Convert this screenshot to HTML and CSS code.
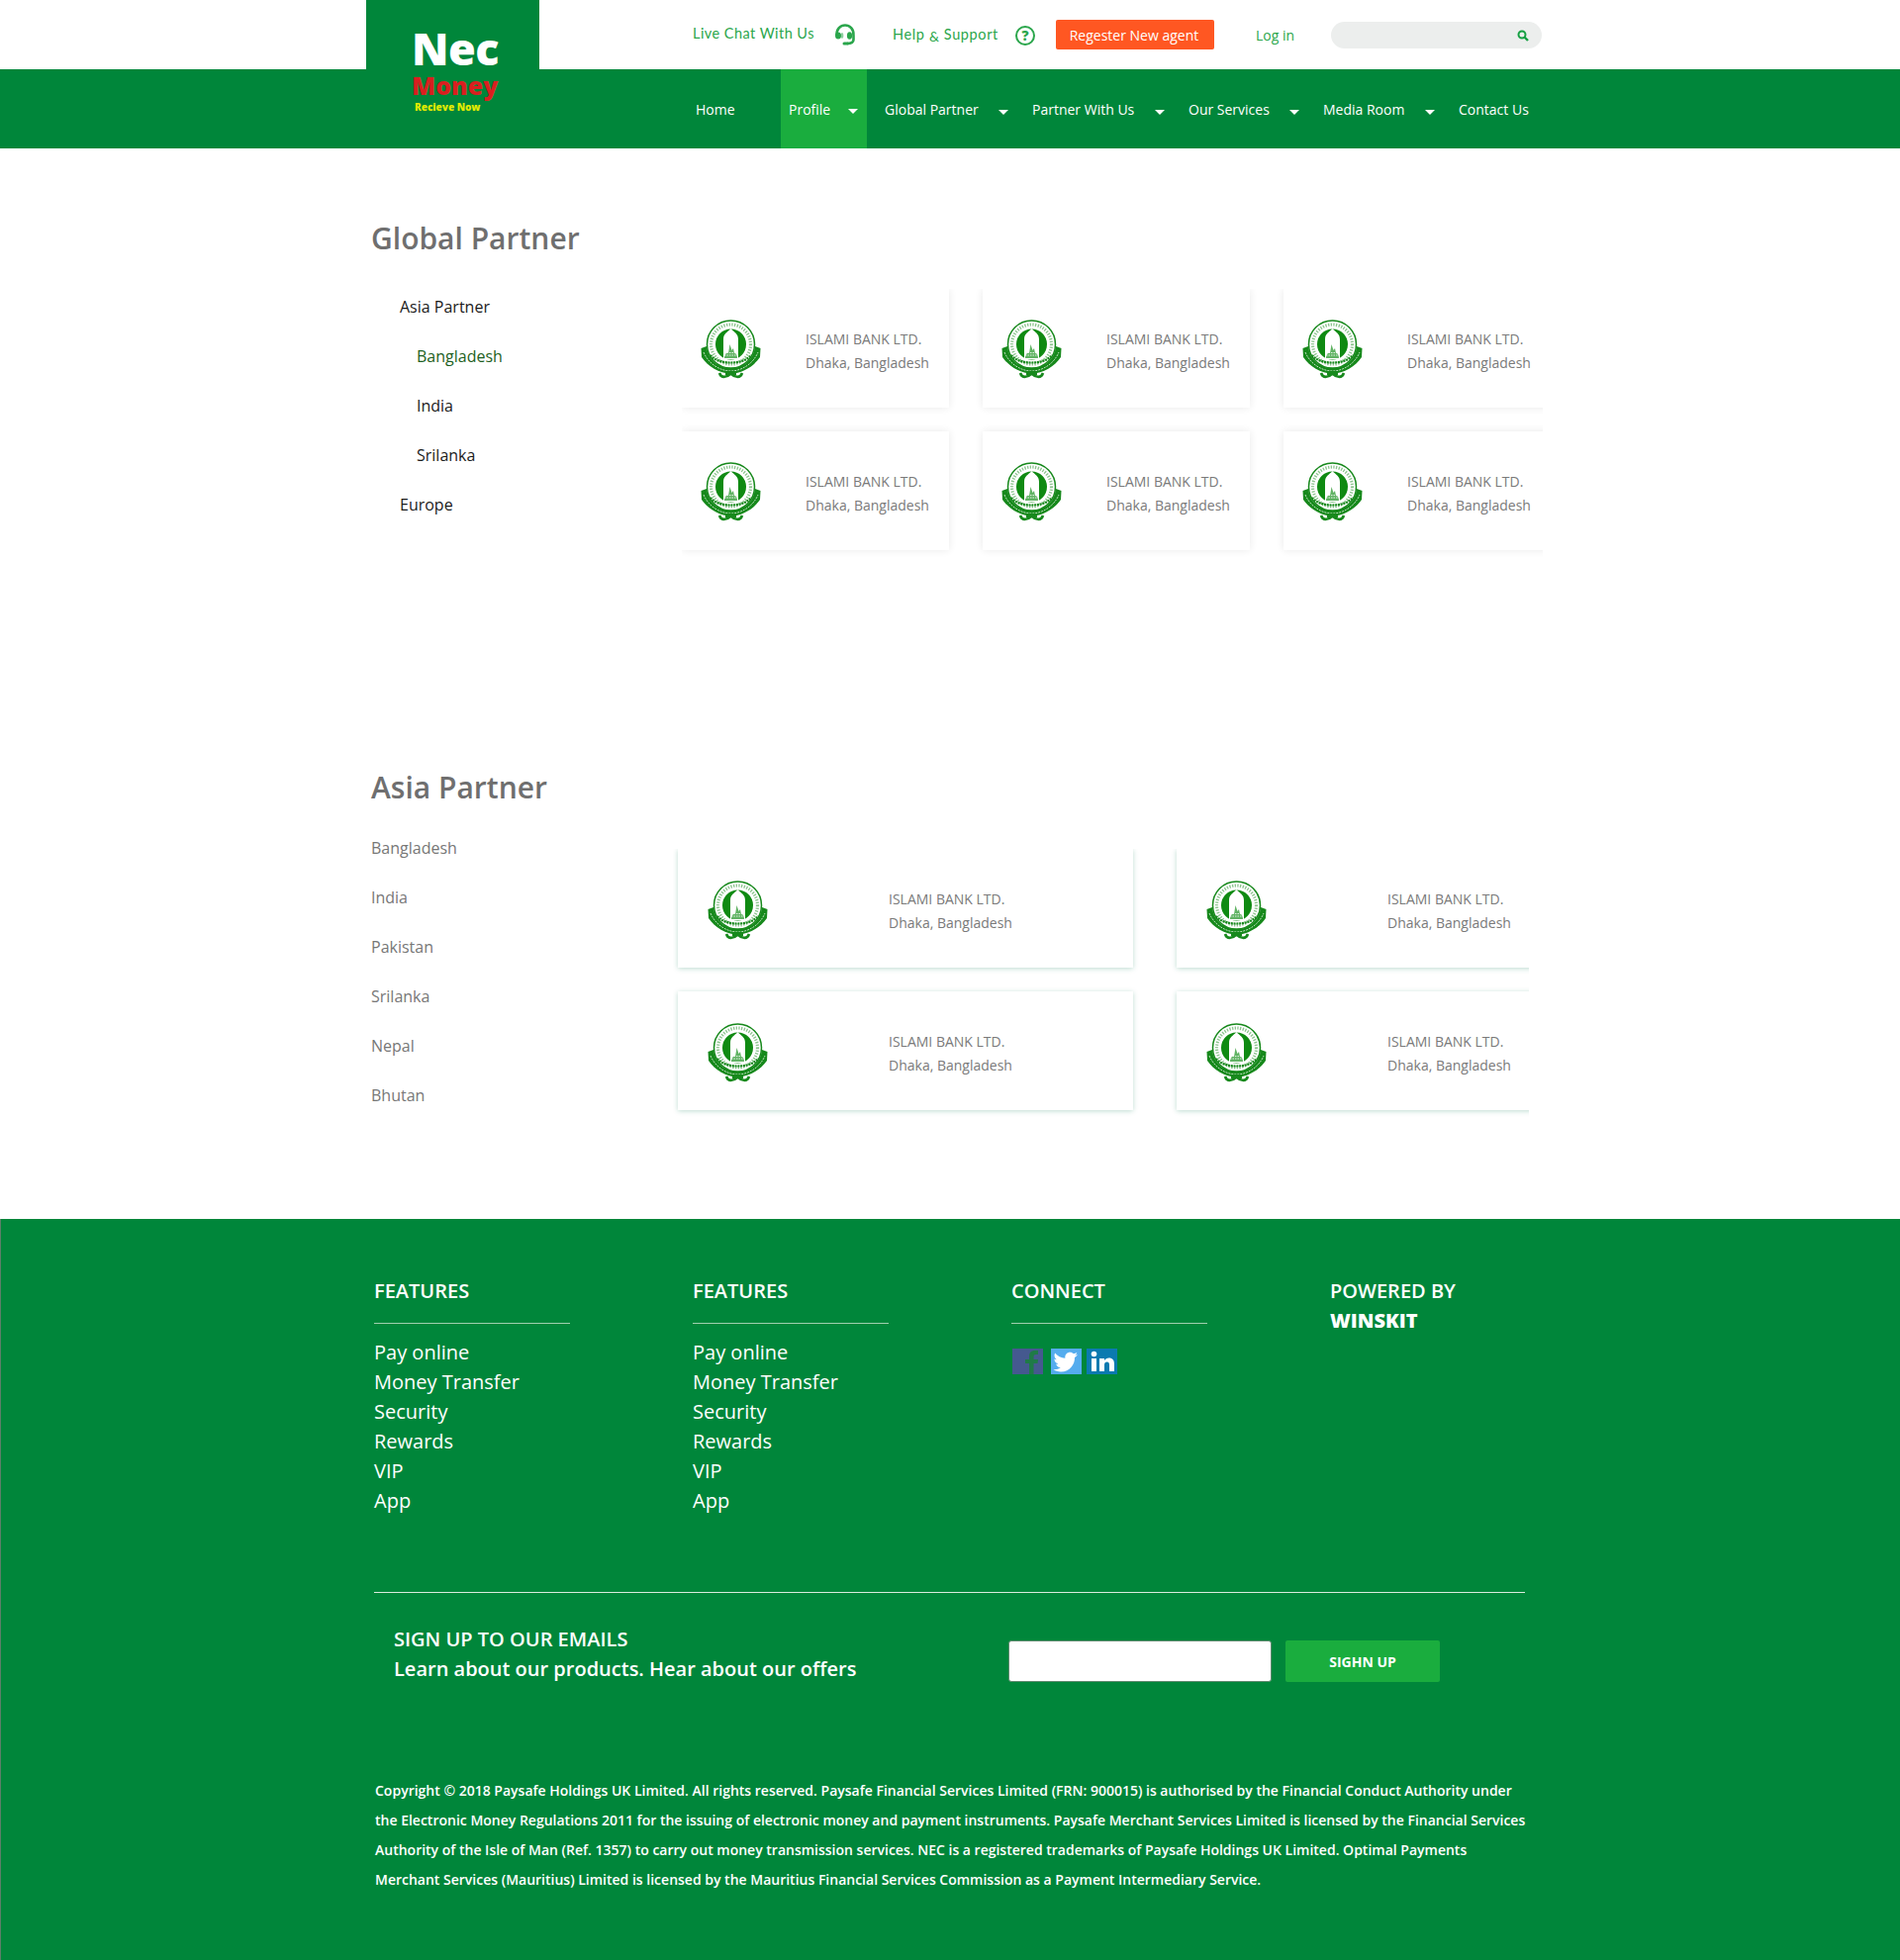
FILE: index.html
```html
<!DOCTYPE html>
<html lang="en">
<head>
<meta charset="utf-8">
<title>Nec Money - Global Partner</title>
<link rel="stylesheet" href="styles.css">
</head>
<body>
<svg class="defs" width="0" height="0" aria-hidden="true">
  <symbol id="emblem" viewBox="0 0 61 60">
    <path d="M0.500 29 L6 27 L7 32 C10 43 20 49 30.500 49 C41 49 51 43 54 32 L55 27 L60.500 29 L60 38 C54 47 42 54.500 30.500 54.500 C19 54.500 7 47 1 38 Z" fill="#17891c"/>
    <path d="M3 33 C8 45 20 52 30.500 52 C41 52 53 45 58 33" fill="none" stroke="#bfe2c0" stroke-width="1" stroke-dasharray="2 1"/>
    <path d="M19 54 C21 60 27 58 30.500 54.500 C34 58 40 60 42 54" fill="none" stroke="#17891c" stroke-width="2.600"/>
    <rect x="25" y="52" width="11" height="4" fill="#17891c"/>
    <circle cx="30.500" cy="25" r="24" fill="#fff" stroke="#17891c" stroke-width="1.500"/>
    <circle cx="30.500" cy="25" r="20" fill="none" stroke="#17891c" stroke-width="3.200" stroke-dasharray="1.300 1.400" opacity=".5"/>
    <circle cx="30.500" cy="25" r="15.500" fill="#0f8a12"/>
    <path d="M23 40 V20 C23 14 27 13 30.500 9 C34 13 38 14 38 20 V40 Z" fill="#fff"/>
    <path d="M24 39 C24 34 27 33 28 34 L29.500 25 L31.500 31 L33 29 L34 34 C36 34 37 36 37 39 Z" fill="#2c9a30" opacity=".75"/>
    <path d="M24 36 H37 M24 33.500 H36" stroke="#fff" stroke-width=".8" stroke-dasharray="1.500 1"/>
    <path d="M10 36 C17 46 44 46 51 36" fill="none" stroke="#17891c" stroke-width="2.200" stroke-dasharray="2 .8"/>
  </symbol>
</svg>

<header class="topbar">
  <div class="util">
    <a class="util-link chat">Live Chat With Us</a>
    <svg class="ico-headset" viewBox="0 0 22 22"><path d="M2.500 12 C2 5 6.500 1.500 11 1.500 C15.500 1.500 20 5 19.500 12 V16 C19.500 19 17 20 13 20" fill="none" stroke="#2ba64c" stroke-width="2.600"/><ellipse cx="4" cy="12" rx="3" ry="3.600" fill="#2ba64c"/><ellipse cx="15.500" cy="12" rx="2.600" ry="3.800" fill="#2ba64c"/><ellipse cx="8" cy="12" rx="1.400" ry="3" fill="#2ba64c" opacity=".55"/><rect x="8.500" y="18.500" width="6.500" height="3" rx="1.500" fill="#2ba64c"/></svg>
    <a class="util-link help">Help <small>&amp;</small> Support</a>
    <span class="ico-help">?</span>
    <a class="register">Regester New agent</a>
    <a class="login">Log in</a>
    <div class="search">
      <svg class="ico-search" viewBox="0 0 12 12"><circle cx="5" cy="5" r="3.500" fill="none" stroke="#16a043" stroke-width="2"/><path d="M7.500 7.500 L11 11" stroke="#16a043" stroke-width="2.400"/></svg>
    </div>
  </div>
</header>

<nav class="mainnav">
  <div class="logo">
    <span class="logo-nec">Nec</span>
    <span class="logo-money">Money</span>
    <span class="logo-tag">Recieve Now</span>
  </div>
  <ul class="menu">
    <li class="m-home"><a>Home</a></li>
    <li class="m-profile"><a>Profile</a><i class="caret"></i></li>
    <li class="m-global"><a>Global Partner</a><i class="caret"></i></li>
    <li class="m-partner"><a>Partner With Us</a><i class="caret"></i></li>
    <li class="m-services"><a>Our Services</a><i class="caret"></i></li>
    <li class="m-media"><a>Media Room</a><i class="caret"></i></li>
    <li class="m-contact"><a>Contact Us</a></li>
  </ul>
</nav>

<main class="content">
  <section class="global">
    <h2 class="title">Global Partner</h2>
    <div class="split">
      <ul class="tree">
        <li>Asia Partner</li>
        <li class="sub active">Bangladesh</li>
        <li class="sub">India</li>
        <li class="sub">Srilanka</li>
        <li>Europe</li>
      </ul>
      <div class="clip clip-three">
        <div class="cards three">
          <article class="card"><svg class="emblem"><use href="#emblem"/></svg><p>ISLAMI BANK LTD.<br>Dhaka, Bangladesh</p></article>
          <article class="card"><svg class="emblem"><use href="#emblem"/></svg><p>ISLAMI BANK LTD.<br>Dhaka, Bangladesh</p></article>
          <article class="card"><svg class="emblem"><use href="#emblem"/></svg><p>ISLAMI BANK LTD.<br>Dhaka, Bangladesh</p></article>
          <article class="card"><svg class="emblem"><use href="#emblem"/></svg><p>ISLAMI BANK LTD.<br>Dhaka, Bangladesh</p></article>
          <article class="card"><svg class="emblem"><use href="#emblem"/></svg><p>ISLAMI BANK LTD.<br>Dhaka, Bangladesh</p></article>
          <article class="card"><svg class="emblem"><use href="#emblem"/></svg><p>ISLAMI BANK LTD.<br>Dhaka, Bangladesh</p></article>
        </div>
      </div>
    </div>
  </section>

  <section class="asia">
    <h2 class="title">Asia Partner</h2>
    <div class="split">
      <ul class="countries">
        <li>Bangladesh</li>
        <li>India</li>
        <li>Pakistan</li>
        <li>Srilanka</li>
        <li>Nepal</li>
        <li>Bhutan</li>
      </ul>
      <div class="clip clip-two">
        <div class="cards two">
          <article class="card wide"><svg class="emblem"><use href="#emblem"/></svg><p>ISLAMI BANK LTD.<br>Dhaka, Bangladesh</p></article>
          <article class="card wide"><svg class="emblem"><use href="#emblem"/></svg><p>ISLAMI BANK LTD.<br>Dhaka, Bangladesh</p></article>
          <article class="card wide"><svg class="emblem"><use href="#emblem"/></svg><p>ISLAMI BANK LTD.<br>Dhaka, Bangladesh</p></article>
          <article class="card wide"><svg class="emblem"><use href="#emblem"/></svg><p>ISLAMI BANK LTD.<br>Dhaka, Bangladesh</p></article>
        </div>
      </div>
    </div>
  </section>
</main>

<footer class="footer">
  <div class="f-cols">
    <div class="f-col">
      <h3 class="f-head">FEATURES</h3>
      <ul class="f-links"><li>Pay online</li><li>Money Transfer</li><li>Security</li><li>Rewards</li><li>VIP</li><li>App</li></ul>
    </div>
    <div class="f-col">
      <h3 class="f-head">FEATURES</h3>
      <ul class="f-links"><li>Pay online</li><li>Money Transfer</li><li>Security</li><li>Rewards</li><li>VIP</li><li>App</li></ul>
    </div>
    <div class="f-col">
      <h3 class="f-head">CONNECT</h3>
      <div class="social">
        <svg class="soc soc-fb" viewBox="0 0 31 26"><rect width="31" height="26" fill="#45598f"/><path d="M17 26 V15 H13 V11 H17 V8 C17 4 19 2 23 2 H26 V6 H24 C22 6 21.500 7 21.500 8.500 V11 H26 L25.500 15 H21.500 V26 Z" fill="#1f7a47"/></svg>
        <svg class="soc soc-tw" viewBox="0 0 31 26"><rect width="31" height="26" fill="#55acee"/><path d="M27 6 C26 6.500 25 6.800 24 7 C25 6.300 26 5.300 26.300 4 C25.300 4.600 24.200 5 23 5.300 C22 4.300 20.700 3.700 19.300 3.700 C16.500 3.700 14.300 6 14.300 8.700 C14.300 9.100 14.300 9.500 14.400 9.800 C10.300 9.600 6.600 7.600 4.100 4.600 C2.900 6.900 3.600 9.800 5.700 11.200 C4.900 11.200 4.100 11 3.400 10.600 C3.400 13 5.100 15.100 7.400 15.600 C6.700 15.800 5.900 15.800 5.100 15.700 C5.800 17.700 7.600 19.100 9.800 19.100 C7.700 20.800 5.100 21.500 2.500 21.200 C4.700 22.600 7.300 23.400 10 23.400 C19.200 23.400 24.300 15.800 24 8.900 C25.200 8.200 26.200 7.200 27 6 Z" fill="#fff"/></svg>
        <svg class="soc soc-in" viewBox="0 0 31 26"><rect width="31" height="26" fill="#0b7ab0"/><circle cx="7.500" cy="5.500" r="2.800" fill="#fff"/><rect x="5" y="10" width="5" height="13" fill="#fff"/><path d="M13 10 H18 V12 C19 10.500 20.500 9.600 22.500 9.600 C26.500 9.600 28 12 28 16 V23 H23 V16.500 C23 14.500 22.300 13.500 20.700 13.500 C19 13.500 18 14.700 18 16.500 V23 H13 Z" fill="#fff"/></svg>
      </div>
    </div>
    <div class="f-col">
      <h3 class="f-head plain">POWERED BY</h3>
      <div class="winskit">WINSKIT</div>
    </div>
  </div>
  <div class="signup">
    <div class="signup-text">
      <div>SIGN UP TO OUR EMAILS</div>
      <div>Learn about our products. Hear about our offers</div>
    </div>
    <div class="signup-form">
      <input class="signup-input" type="text" aria-label="Email">
      <button class="signup-btn" type="button">SIGHN UP</button>
    </div>
  </div>
  <p class="copyright">Copyright © 2018 Paysafe Holdings UK Limited. All rights reserved. Paysafe Financial Services Limited (FRN: 900015) is authorised by the Financial Conduct Authority under the Electronic Money Regulations 2011 for the issuing of electronic money and payment instruments. Paysafe Merchant Services Limited is licensed by the Financial Services Authority of the Isle of Man (Ref. 1357) to carry out money transmission services. NEC is a registered trademarks of Paysafe Holdings UK Limited. Optimal Payments Merchant Services (Mauritius) Limited is licensed by the Mauritius Financial Services Commission as a Payment Intermediary Service.</p>
</footer>
</body>
</html>
```
FILE: styles.css
```css
* { box-sizing: border-box; }
html, body { margin: 0; padding: 0; }
body { font-family: "Open Sans", "Liberation Sans", sans-serif; background: #fff; color: #777; width: 1920px; height: 1981px; overflow: hidden; }
ul { list-style: none; margin: 0; padding: 0; }
h2, h3, p { margin: 0; }
.defs { position: absolute; }

.topbar { height: 70px; padding-left: 700px; }
.util { display: flex; align-items: center; height: 70px; width: 858px; }
.util-link { font-family: "Lato", "Open Sans", sans-serif; font-size: 14.500px; letter-spacing: .45px; color: #2ba64c; white-space: nowrap; }
.util-link small { font-size: 14px; position: relative; top: 2px; }
.chat { width: 143px; margin-top: -4px; }
.ico-headset { width: 22px; height: 22px; margin-top: 0; flex: none; }
.help { margin-left: 37px; width: 124px; margin-top: -1px; letter-spacing: .62px; }
.ico-help { width: 20px; height: 20px; border: 2.500px solid #2ba64c; border-radius: 50%; color: #2ba64c; font-size: 14px; font-weight: 800; line-height: 15px; text-align: center; flex: none; margin-top: 2px; }
.register { margin-left: 21px; width: 160px; height: 30px; background: #ff5722; color: #fff; border-radius: 2px; font-size: 14px; line-height: 31px; text-align: center; flex: none; padding-right: 2px; }
.login { margin-left: 42px; width: 76px; font-size: 14px; color: #2ba64c; }
.search { width: 213px; height: 27px; border-radius: 14px; background: #eceeed; position: relative; flex: none; }
.ico-search { position: absolute; right: 13px; top: 8px; width: 12px; height: 12px; }

.mainnav { height: 80px; background: #00863a; position: relative; }
.logo { position: absolute; left: 370px; top: -70px; width: 175px; height: 70px; background: #00863a; }
.logo-nec { position: absolute; left: 46px; top: 30px; font-size: 45px; line-height: 38px; font-weight: 800; color: #fff; letter-spacing: -.5px; }
.logo-money { position: absolute; left: 46px; top: 74px; font-size: 25px; line-height: 24px; font-weight: 800; color: #d91f1f; }
.logo-tag { position: absolute; left: 49px; top: 101px; font-size: 10px; line-height: 14px; font-weight: 800; color: #e0ea00; white-space: nowrap; }

.menu { display: flex; height: 80px; padding-left: 695px; color: #fff; font-size: 14px; }
.menu li { display: flex; align-items: center; justify-content: space-between; padding: 0 16px 0 8px; white-space: nowrap; }
.menu a { color: #fff; }
.m-home { width: 94px; }
.menu .m-profile { width: 87px; background: #1aad3e; padding-right: 9px; }
.menu .m-global { width: 159px; padding-left: 18px; }
.m-partner { width: 158px; }
.m-services { width: 136px; }
.m-media { width: 137px; }
.m-contact { width: 100px; }
.caret { width: 0; height: 0; border-left: 5px solid transparent; border-right: 5px solid transparent; border-top: 5px solid #fff; margin-top: 6px; flex: none; }
.menu .m-profile .caret { margin-top: 4px; }

.content { padding-left: 375px; width: 1560px; }
.title { font-size: 30px; line-height: 40px; font-weight: 600; color: #6f6f6f; }
.global { padding-top: 71px; }
.asia { padding-top: 208px; padding-bottom: 98px; }
.asia .split { padding-top: 15px; }
.global .split { padding-top: 24px; }
.split { display: flex; }

.tree { width: 314px; padding-left: 29px; font-size: 16px; line-height: 50px; color: #1b1b1b; }
.tree .sub { padding-left: 17px; }
.tree .active { color: #1d5f22; }
.countries { width: 310px; padding-top: 1px; font-size: 16px; line-height: 50px; color: #777; }

.clip { overflow: hidden; }
.clip-three { width: 870px; margin-top: 7px; padding: 0 0 12px 0; }
.clip-two { width: 865px; margin-top: 27px; padding: 0 0 12px 0; margin-left: -5px; }
.clip-two .cards { padding-left: 5px; }
.cards { display: grid; row-gap: 24px; }
.three { grid-template-columns: repeat(3, 270px); column-gap: 34px; }
.two { grid-template-columns: repeat(2, 460px); column-gap: 44px; }

.card { height: 120px; background: #fff; box-shadow: 0 0 8px rgba(0, 0, 0, .09); display: flex; align-items: flex-start; }
.card.wide { box-shadow: 0 1px 5px rgba(20, 130, 90, .28); }
.emblem { width: 61px; height: 60px; margin: 31px 0 0 19px; flex: none; }
.wide .emblem { margin: 32px 0 0 30px; }
.card p { margin: 39px 0 0 45px; font-size: 14px; line-height: 24px; color: #7a7a7a; white-space: nowrap; }
.card.wide p { margin: 39px 0 0 122px; }

.footer { height: 749px; background: #00863a; border-left: 1px solid #5b7f68; color: #fff; padding: 58px 0 0 377px; }
.f-cols { display: flex; height: 319px; }
.f-col { width: 322px; }
.f-head { font-size: 20px; line-height: 30px; font-weight: 600; width: 198px; padding-bottom: 17px; border-bottom: 1px solid #9fd0b0; color: #fff; }
.f-head.plain { border-bottom: 0; padding-bottom: 0; width: auto; }
.f-links { margin-top: 14px; font-size: 20px; line-height: 30px; }
.winskit { font-size: 20px; line-height: 30px; font-weight: 800; }
.social { display: flex; margin-top: 25px; padding-left: 1px; }
.soc { width: 31px; height: 26px; }
.soc-tw { margin-left: 8px; }
.soc-in { margin-left: 5px; }

.signup { width: 1163px; border-top: 1px solid #d9ecdf; display: flex; padding: 32px 0 0 20px; height: 124px; }
.signup-text { width: 621px; font-size: 20px; line-height: 30px; font-weight: 600; }
.signup-form { display: flex; margin-top: 16px; align-items: flex-start; }
.signup-input { width: 266px; height: 42px; border: 1px solid #5f8a6f; border-radius: 3px; background: #fff; padding: 0; }
.signup-btn { width: 156px; height: 42px; margin-left: 14px; background: #1aad3e; border: 0; border-radius: 2px; color: #fff; font: 700 14px "Open Sans", sans-serif; }
.copyright { width: 1170px; margin: 62px 0 0 1px; font-size: 14px; line-height: 30px; font-weight: 600; color: #fff; }
```
